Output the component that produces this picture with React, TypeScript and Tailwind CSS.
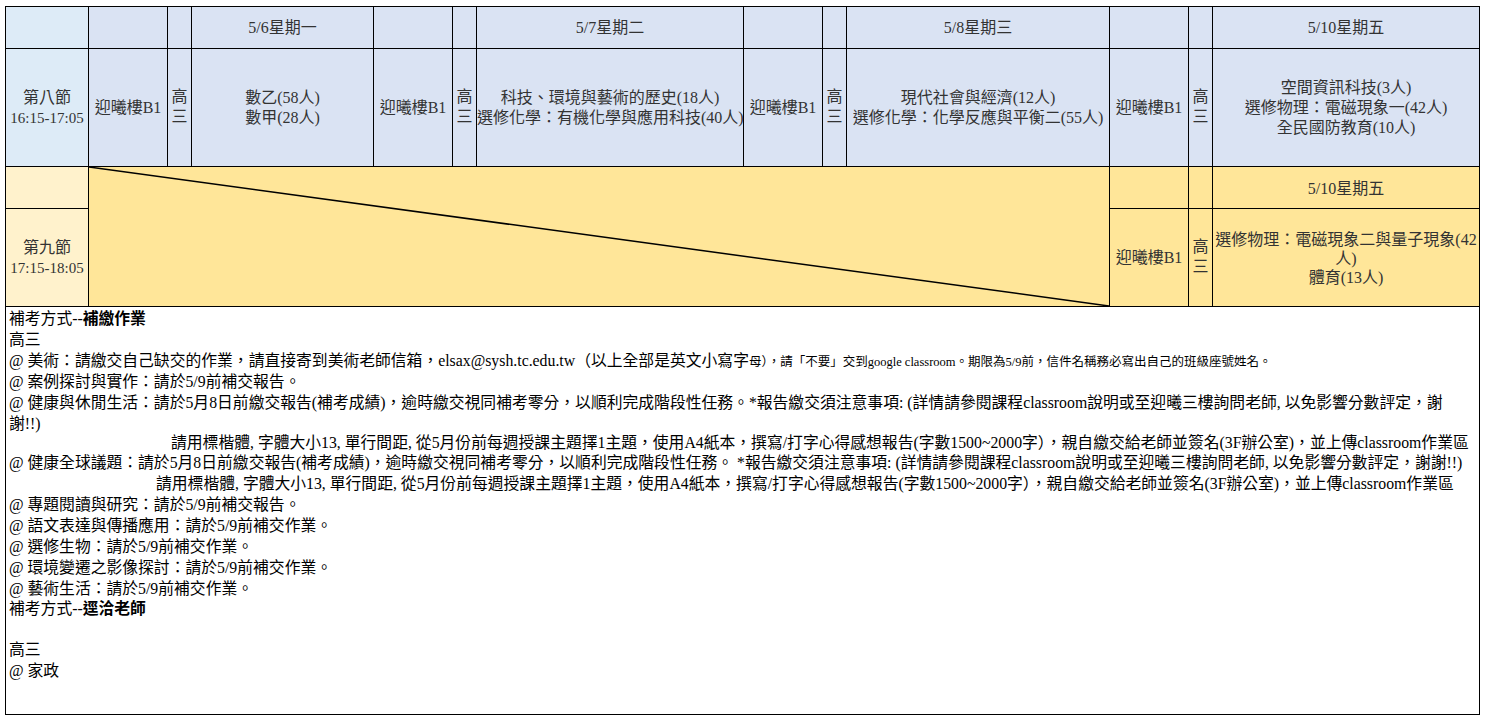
const serif = "font-['Liberation_Serif','Noto_Sans_CJK_TC',serif]";

const days = [
  { date: "5/6星期一", lines: ["數乙(58人)", "數甲(28人)"] },
  { date: "5/7星期二", lines: ["科技、環境與藝術的歷史(18人)", "選修化學：有機化學與應用科技(40人)"] },
  { date: "5/8星期三", lines: ["現代社會與經濟(12人)", "選修化學：化學反應與平衡二(55人)"] },
  { date: "5/10星期五", lines: ["空間資訊科技(3人)", "選修物理：電磁現象一(42人)", "全民國防教育(10人)"] },
];

const widths = [
  "w-[83px]", "w-[79px]", "w-[24px]", "w-[182px]", "w-[79px]", "w-[24px]", "w-[267px]",
  "w-[79px]", "w-[24px]", "w-[263px]", "w-[79px]", "w-[24px]", "w-[267px]",
];

const cell = "border border-black text-center align-middle px-0 whitespace-nowrap";

function Grade() {
  return (
    <span className="inline-block leading-[20px]">
      高<br />三
    </span>
  );
}

function Lines({ lines }: { lines: string[] }) {
  return (
    <>
      {lines.map((l, i) => (
        <div key={i} className="leading-[20px]">
          {l}
        </div>
      ))}
    </>
  );
}

export default function App() {
  return (
    <div className={`${serif} bg-white min-h-screen pl-[5px] pt-[6px]`}>
      <table className="table-fixed border-collapse w-[1475px] text-[16px] text-[#333]">
        <colgroup>
          {widths.map((w, i) => (
            <col key={i} className={w} />
          ))}
        </colgroup>
        <tbody>
          {/* header */}
          <tr className="h-[42px]">
            <td className={`${cell} bg-[#ddebf7]`} />
            {days.map((d) => (
              <Header key={d.date} date={d.date} />
            ))}
          </tr>

          {/* 第八節 */}
          <tr className="h-[118px]">
            <td className={`${cell} bg-[#ddebf7] leading-[20px]`}>
              第八節
              <br />
              <span className="text-[15px]">16:15-17:05</span>
            </td>
            {days.map((d) => (
              <Period key={d.date} lines={d.lines} bg="bg-[#dae3f3]" />
            ))}
          </tr>

          {/* 第九節 header */}
          <tr className="h-[42px]">
            <td className={`${cell} bg-[#fff2cc]`} />
            <td colSpan={9} rowSpan={2} className="border border-black bg-[#ffe699] relative p-0">
              <svg className="absolute inset-0 w-full h-full" preserveAspectRatio="none">
                <line x1="0" y1="0" x2="100%" y2="100%" stroke="black" strokeWidth="1.5" />
              </svg>
            </td>
            <td className={`${cell} bg-[#ffe699]`} />
            <td className={`${cell} bg-[#ffe699]`} />
            <td className={`${cell} bg-[#ffe699] pt-[2px]`}>5/10星期五</td>
          </tr>

          {/* 第九節 */}
          <tr className="h-[98px]">
            <td className={`${cell} bg-[#fff2cc] leading-[20px]`}>
              第九節
              <br />
              <span className="text-[15px]">17:15-18:05</span>
            </td>
            <td className={`${cell} bg-[#ffe699]`}>迎曦樓B1</td>
            <td className={`${cell} bg-[#ffe699]`}>
              <Grade />
            </td>
            <td className={`${cell} bg-[#ffe699] pt-[2px]`}>
              <div className="leading-[19px]">選修物理：電磁現象二與量子現象(42</div>
              <div className="leading-[19px]">人)</div>
              <div className="leading-[20px]">體育(13人)</div>
            </td>
          </tr>

          {/* notes */}
          <tr className="h-[408px]">
            <td colSpan={13} className="border border-black align-top pl-[3px] pt-[1px] text-black text-[15.8px] leading-[21px]">
              <Notes />
            </td>
          </tr>
        </tbody>
      </table>
    </div>
  );
}

function Header({ date }: { date: string }) {
  return (
    <>
      <td className={`${cell} bg-[#dae3f3]`} />
      <td className={`${cell} bg-[#dae3f3]`} />
      <td className={`${cell} bg-[#dae3f3]`}>{date}</td>
    </>
  );
}

function Period({ lines, bg }: { lines: string[]; bg: string }) {
  return (
    <>
      <td className={`${cell} ${bg}`}>迎曦樓B1</td>
      <td className={`${cell} ${bg}`}>
        <Grade />
      </td>
      <td className={`${cell} ${bg}`}>
        <Lines lines={lines} />
      </td>
    </>
  );
}

function Notes() {
  const rows = [
    "@ 案例探討與實作：請於5/9前補交報告。",
    "@ 健康與休閒生活：請於5月8日前繳交報告(補考成績)，逾時繳交視同補考零分，以順利完成階段性任務。*報告繳交須注意事項: (詳情請參閱課程classroom說明或至迎曦三樓詢問老師, 以免影響分數評定，謝",
    "謝!!)",
  ];
  const later = [
    "@ 專題閱讀與研究：請於5/9前補交報告。",
    "@ 語文表達與傳播應用：請於5/9前補交作業。",
    "@ 選修生物：請於5/9前補交作業。",
    "@ 環境變遷之影像探討：請於5/9前補交作業。",
    "@ 藝術生活：請於5/9前補交作業。",
  ];
  const essay =
    "請用標楷體, 字體大小13, 單行間距, 從5月份前每週授課主題擇1主題，使用A4紙本，撰寫/打字心得感想報告(字數1500~2000字），親自繳交給老師並簽名(3F辦公室)，並上傳classroom作業區";

  return (
    <div className="whitespace-nowrap">
      <div>
        補考方式--<b>補繳作業</b>
      </div>
      <div>高三</div>
      <div className="h-[21px]">
        @ 美術：請繳交自己缺交的作業，請直接寄到美術老師信箱，elsax@sysh.tc.edu.tw（以上全部是英文小寫字
        <span className="text-[12.5px] leading-[12px]">
          母），請「不要」交到google classroom。期限為5/9前，信件名稱務必寫出自己的班級座號姓名。
        </span>
      </div>
      {rows.map((r, i) => (
        <div key={i}>{r}</div>
      ))}
      <div className="pl-[162px] leading-[18px]">{essay}</div>
      <div>
        @ 健康全球議題：請於5月8日前繳交報告(補考成績)，逾時繳交視同補考零分，以順利完成階段性任務。 *報告繳交須注意事項: (詳情請參閱課程classroom說明或至迎曦三樓詢問老師, 以免影響分數評定，謝謝!!)
      </div>
      <div className="pl-[147px]">{essay}</div>
      {later.map((r, i) => (
        <div key={i}>{r}</div>
      ))}
      <div className="leading-[19px]">
        補考方式--<b>逕洽老師</b>
      </div>
      <div className="h-[21px]" />
      <div>高三</div>
      <div>@ 家政</div>
    </div>
  );
}
